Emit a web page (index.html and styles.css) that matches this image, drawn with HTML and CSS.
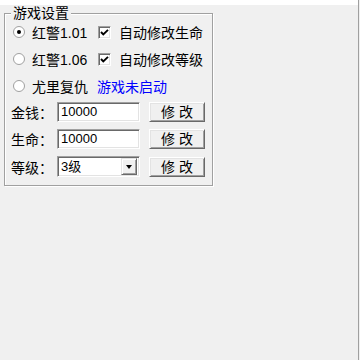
FILE: index.html
```html
<!DOCTYPE html>
<html lang="zh-CN">
<head>
<meta charset="utf-8">
<title>游戏设置</title>
<link rel="stylesheet" href="styles.css">
</head>
<body>
<div class="window">
  <div class="topbar"></div>
  <fieldset class="group">
    <legend class="group-title">游戏设置</legend>
    <div class="opt-row">
      <label class="col1"><input type="radio" name="ver" class="radio" checked><span>红警1.01</span></label>
      <label class="col2"><input type="checkbox" class="check" checked><span class="checkmark"><svg viewBox="0 0 9 9" width="9" height="9"><polyline points="1,4 3.3,6.5 8,1.8" fill="none" stroke="#000" stroke-width="1.9"/></svg></span><span>自动修改生命</span></label>
    </div>
    <div class="opt-row">
      <label class="col1"><input type="radio" name="ver" class="radio"><span>红警1.06</span></label>
      <label class="col2"><input type="checkbox" class="check" checked><span class="checkmark"><svg viewBox="0 0 9 9" width="9" height="9"><polyline points="1,4 3.3,6.5 8,1.8" fill="none" stroke="#000" stroke-width="1.9"/></svg></span><span>自动修改等级</span></label>
    </div>
    <div class="opt-row">
      <label class="col1"><input type="radio" name="ver" class="radio"><span>尤里复仇</span></label>
      <span class="status">游戏未启动</span>
    </div>
    <div class="field-row">
      <span class="field-label">金钱：</span>
      <div class="textbox">10000</div>
      <button class="btn">修 改</button>
    </div>
    <div class="field-row">
      <span class="field-label">生命：</span>
      <div class="textbox">10000</div>
      <button class="btn">修 改</button>
    </div>
    <div class="field-row combo-row">
      <span class="field-label">等级：</span>
      <div class="combo"><span class="combo-text">3级</span><span class="combo-btn"><span class="arrow"></span></span></div>
      <button class="btn">修 改</button>
    </div>
  </fieldset>
</div>
</body>
</html>
```
FILE: styles.css
```css
html, body {
  margin: 0;
  padding: 0;
  background: #f0f0f0;
}
body {
  font-family: "Liberation Sans", "Noto Sans CJK SC", sans-serif;
  font-size: 14px;
  color: #000;
}
.window {
  width: 358px;
  height: 360px;
  border-right: 1px solid #a0a0a0;
  box-sizing: content-box;
}
.topbar {
  height: 5px;
  background: #fff;
}
.group {
  margin: 0 0 0 4px;
  width: 209px;
  box-sizing: border-box;
  padding: 0 6px 8px 7px;
  border: 1px solid #a0a0a0;
  box-shadow: inset 1px 1px 0 #fff, 1px 1px 0 #fff;
  min-width: 0;
}
.group-title {
  padding: 0 2px;
  margin-left: -1px;
  line-height: 16px;
  height: 16px;
  background: #f0f0f0;
}
.opt-row {
  display: flex;
  align-items: center;
  height: 22px;
  margin-bottom: 5px;
}
.col1 {
  width: 86px;
  display: flex;
  align-items: center;
  flex: none;
}
.col2 {
  display: flex;
  align-items: center;
  position: relative;
}
.radio {
  appearance: none;
  -webkit-appearance: none;
  margin: 0 7px 0 1px;
  width: 12px;
  height: 12px;
  border-radius: 50%;
  border: 1px solid #a0a0a0;
  background: #fff;
  box-sizing: border-box;
  position: relative;
  flex: none;
}
.radio:checked::after {
  content: "";
  position: absolute;
  left: 3px;
  top: 3px;
  width: 4px;
  height: 4px;
  border-radius: 50%;
  background: #000;
}
.check {
  appearance: none;
  -webkit-appearance: none;
  margin: 0 8px 0 0;
  width: 13px;
  height: 13px;
  box-sizing: border-box;
  background: #fff;
  border-top: 1px solid #a0a0a0;
  border-left: 1px solid #a0a0a0;
  border-right: 1px solid #fff;
  border-bottom: 1px solid #fff;
  box-shadow: inset 1px 1px 0 #696969, inset -1px -1px 0 #e3e3e3;
  flex: none;
}
.checkmark {
  position: absolute;
  left: 2px;
  top: 50%;
  margin-top: -4.5px;
  width: 9px;
  height: 9px;
  display: flex;
}
.status {
  color: #0000ff;
  margin-left: -1px;
}
.field-row {
  display: flex;
  align-items: center;
  height: 20px;
  margin-top: 5px;
}
.field-row + .field-row {
  margin-top: 7px;
}
.combo-row {
  height: 21px;
}
.field-label {
  width: 46px;
  flex: none;
  margin-left: -1px;
}
.textbox, .combo {
  width: 83px;
  height: 20px;
  box-sizing: border-box;
  background: #fff;
  border-top: 1px solid #a0a0a0;
  border-left: 1px solid #a0a0a0;
  border-right: 1px solid #fff;
  border-bottom: 1px solid #fff;
  box-shadow: inset 1px 1px 0 #696969, inset -1px -1px 0 #e3e3e3;
  font-size: 13px;
  line-height: 18px;
  padding-left: 3px;
  flex: none;
}
.combo {
  height: 21px;
  display: flex;
  align-items: center;
  padding: 2px 2px 2px 3px;
}
.combo-text {
  flex: 1;
  line-height: 17px;
}
.combo-btn {
  width: 16px;
  height: 17px;
  box-sizing: border-box;
  background: #f0f0f0;
  border-top: 1px solid #e3e3e3;
  border-left: 1px solid #e3e3e3;
  border-right: 1px solid #696969;
  border-bottom: 1px solid #696969;
  box-shadow: inset 1px 1px 0 #fff, inset -1px -1px 0 #a0a0a0;
  display: flex;
  align-items: center;
  justify-content: center;
}
.arrow {
  width: 0;
  height: 0;
  border-left: 3.5px solid transparent;
  border-right: 3.5px solid transparent;
  border-top: 4px solid #000;
}
.btn {
  margin-left: 9px;
  width: 56px;
  height: 20px;
  box-sizing: border-box;
  padding: 0;
  font-family: "Liberation Sans", "Noto Sans CJK SC", sans-serif;
  font-size: 14px;
  line-height: 16px;
  color: #000;
  background: #f0f0f0;
  border-top: 1px solid #fff;
  border-left: 1px solid #fff;
  border-right: 1px solid #696969;
  border-bottom: 1px solid #696969;
  box-shadow: inset 1px 1px 0 #e3e3e3, inset -1px -1px 0 #a0a0a0;
  flex: none;
}
```
